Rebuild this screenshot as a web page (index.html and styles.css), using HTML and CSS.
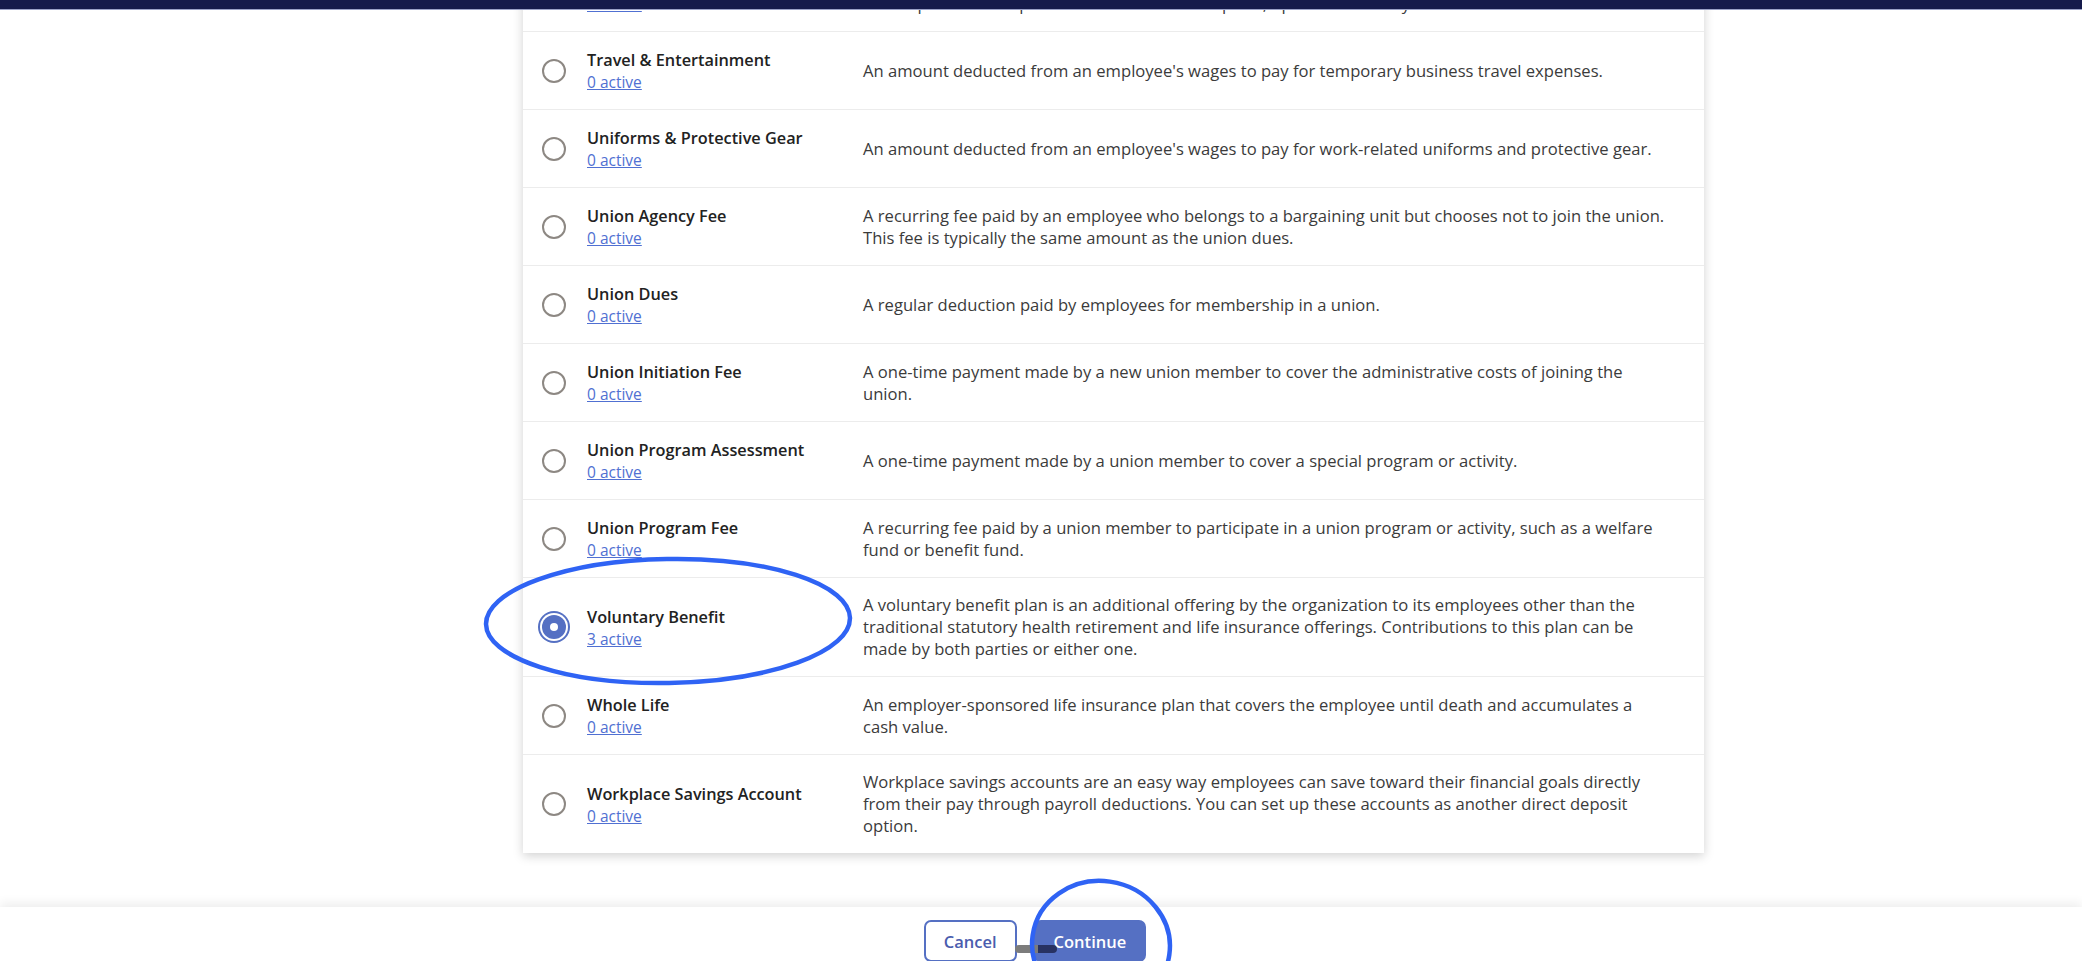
FILE: index.html
```html
<!DOCTYPE html>
<html>
<head>
<meta name="viewport" content="width=device-width, initial-scale=1">
<link rel="stylesheet" href="styles.css">
</head>
<body>

<div class="topbar"></div>

<main class="scroller">
  <div class="card">

    <div class="row">
      <span class="radio"></span>
      <div class="name">
        <div class="title">Transportation</div>
        <a href="#" class="count">0 active</a>
      </div>
      <p class="desc">An amount deducted from an employee's wages to pay for commuting costs such as parking, a monthly transit pass or a vanpool to and from the workplace, up to the monthly limit.</p>
    </div>

    <div class="row">
      <span class="radio"></span>
      <div class="name">
        <div class="title">Travel &amp; Entertainment</div>
        <a href="#" class="count">0 active</a>
      </div>
      <p class="desc">An amount deducted from an employee's wages to pay for temporary business travel expenses.</p>
    </div>

    <div class="row">
      <span class="radio"></span>
      <div class="name">
        <div class="title">Uniforms &amp; Protective Gear</div>
        <a href="#" class="count">0 active</a>
      </div>
      <p class="desc">An amount deducted from an employee's wages to pay for work-related uniforms and protective gear.</p>
    </div>

    <div class="row">
      <span class="radio"></span>
      <div class="name">
        <div class="title">Union Agency Fee</div>
        <a href="#" class="count">0 active</a>
      </div>
      <p class="desc">A recurring fee paid by an employee who belongs to a bargaining unit but chooses not to join the union. This fee is typically the same amount as the union dues.</p>
    </div>

    <div class="row">
      <span class="radio"></span>
      <div class="name">
        <div class="title">Union Dues</div>
        <a href="#" class="count">0 active</a>
      </div>
      <p class="desc">A regular deduction paid by employees for membership in a union.</p>
    </div>

    <div class="row">
      <span class="radio"></span>
      <div class="name">
        <div class="title">Union Initiation Fee</div>
        <a href="#" class="count">0 active</a>
      </div>
      <p class="desc">A one-time payment made by a new union member to cover the administrative costs of joining the union.</p>
    </div>

    <div class="row">
      <span class="radio"></span>
      <div class="name">
        <div class="title">Union Program Assessment</div>
        <a href="#" class="count">0 active</a>
      </div>
      <p class="desc">A one-time payment made by a union member to cover a special program or activity.</p>
    </div>

    <div class="row">
      <span class="radio"></span>
      <div class="name">
        <div class="title">Union Program Fee</div>
        <a href="#" class="count">0 active</a>
      </div>
      <p class="desc">A recurring fee paid by a union member to participate in a union program or activity, such as a welfare fund or benefit fund.</p>
    </div>

    <div class="row">
      <span class="radio checked"></span>
      <div class="name">
        <div class="title">Voluntary Benefit</div>
        <a href="#" class="count">3 active</a>
      </div>
      <p class="desc">A voluntary benefit plan is an additional offering by the organization to its employees other than the traditional statutory health retirement and life insurance offerings. Contributions to this plan can be made by both parties or either one.</p>
    </div>

    <div class="row">
      <span class="radio"></span>
      <div class="name">
        <div class="title">Whole Life</div>
        <a href="#" class="count">0 active</a>
      </div>
      <p class="desc">An employer-sponsored life insurance plan that covers the employee until death and accumulates a cash value.</p>
    </div>

    <div class="row">
      <span class="radio"></span>
      <div class="name">
        <div class="title">Workplace Savings Account</div>
        <a href="#" class="count">0 active</a>
      </div>
      <p class="desc">Workplace savings accounts are an easy way employees can save toward their financial goals directly from their pay through payroll deductions. You can set up these accounts as another direct deposit option.</p>
    </div>

  </div>
</main>

<footer class="actions">
  <button class="btn btn-outline">Cancel</button>
  <button class="btn btn-primary">Continue</button>
</footer>

<!-- scrollbar thumb left over from the capture -->
<div class="thumb"></div>

<!-- hand drawn highlight marks -->
<svg class="marks" width="2082" height="961" viewBox="0 0 2082 961">
  <ellipse cx="668" cy="621" rx="182" ry="62" transform="rotate(-1 668 621)"/>
  <ellipse cx="1101" cy="945" rx="69" ry="64" transform="rotate(8 1101 945)"/>
</svg>

</body>
</html>
```

FILE: styles.css
```css
html, body {
  margin: 0;
  height: 100%;
}

body {
  font-family: "Open Sans", Arial, sans-serif;
  background: #fff;
  display: flex;
  flex-direction: column;
  overflow: hidden;
  position: relative;
}

/* Dark app bar at the very top */
.topbar {
  flex: none;
  height: 9px;
  background: #151a4b;
  border-bottom: 1px solid #9aa0c6;
  position: relative;
  z-index: 2;
}

/* Scrolled list area */
.scroller {
  flex: 1;
  overflow: hidden;
  padding-left: 523px;
}

.card {
  width: 1181px;
  margin-top: -56px;
  background: #fff;
  box-shadow: 0 3px 10px rgba(0,0,0,0.18);
}

.row {
  display: flex;
  align-items: center;
  padding: 16px 24px 16px 19px;
  border-bottom: 1px solid #ececec;
}

.row:last-child {
  border-bottom: none;
}

/* Radio buttons */
.radio {
  flex: none;
  width: 24px;
  height: 24px;
  box-sizing: border-box;
  border: 2px solid #8d8883;
  border-radius: 50%;
  margin-right: 21px;
}

.radio.checked {
  border: none;
  background: #5570c3;
  box-shadow: 0 0 0 2px #fff, 0 0 0 4px #5570c3;
  display: flex;
  align-items: center;
  justify-content: center;
}

.radio.checked::after {
  content: "";
  width: 8px;
  height: 8px;
  border-radius: 50%;
  background: #fff;
}

.name {
  flex: none;
  width: 276px;
}

.title {
  font-size: 16.3px;
  font-weight: 600;
  line-height: 24px;
  color: #222;
}

.count {
  display: block;
  font-size: 15.5px;
  line-height: 21px;
  color: #5070d2;
  text-decoration: underline;
}

.desc {
  margin: 0;
  max-width: 807px;
  font-size: 16.6px;
  line-height: 22px;
  color: #3b3b3b;
}

/* Sticky footer with the actions */
.actions {
  flex: none;
  height: 54px;
  box-sizing: border-box;
  display: flex;
  justify-content: center;
  align-items: flex-start;
  gap: 17px;
  padding: 13px 12px 0 0;
  background: #fff;
  box-shadow: 0 -4px 10px rgba(0,0,0,0.07);
  position: relative;
  z-index: 1;
}

.btn {
  height: 42px;
  padding: 0 18px;
  border-radius: 7px;
  font-family: "Open Sans", Arial, sans-serif;
  font-size: 16.5px;
  font-weight: 600;
  cursor: pointer;
}

.btn-outline {
  background: #fff;
  color: #4a5cae;
  border: 2px solid #5570c3;
}

.btn-primary {
  background: #5570c3;
  color: #fff;
  border: 2px solid #5570c3;
}

.thumb {
  position: absolute;
  left: 1015px;
  top: 945px;
  width: 42px;
  height: 8px;
  border-radius: 4px;
  background: linear-gradient(to right, #7c7c7c 55%, #283262 55%);
  z-index: 3;
}

.marks {
  position: absolute;
  left: 0;
  top: 0;
  pointer-events: none;
  z-index: 4;
}

.marks ellipse {
  fill: none;
  stroke: #2f63f4;
  stroke-width: 4.5;
}
```
